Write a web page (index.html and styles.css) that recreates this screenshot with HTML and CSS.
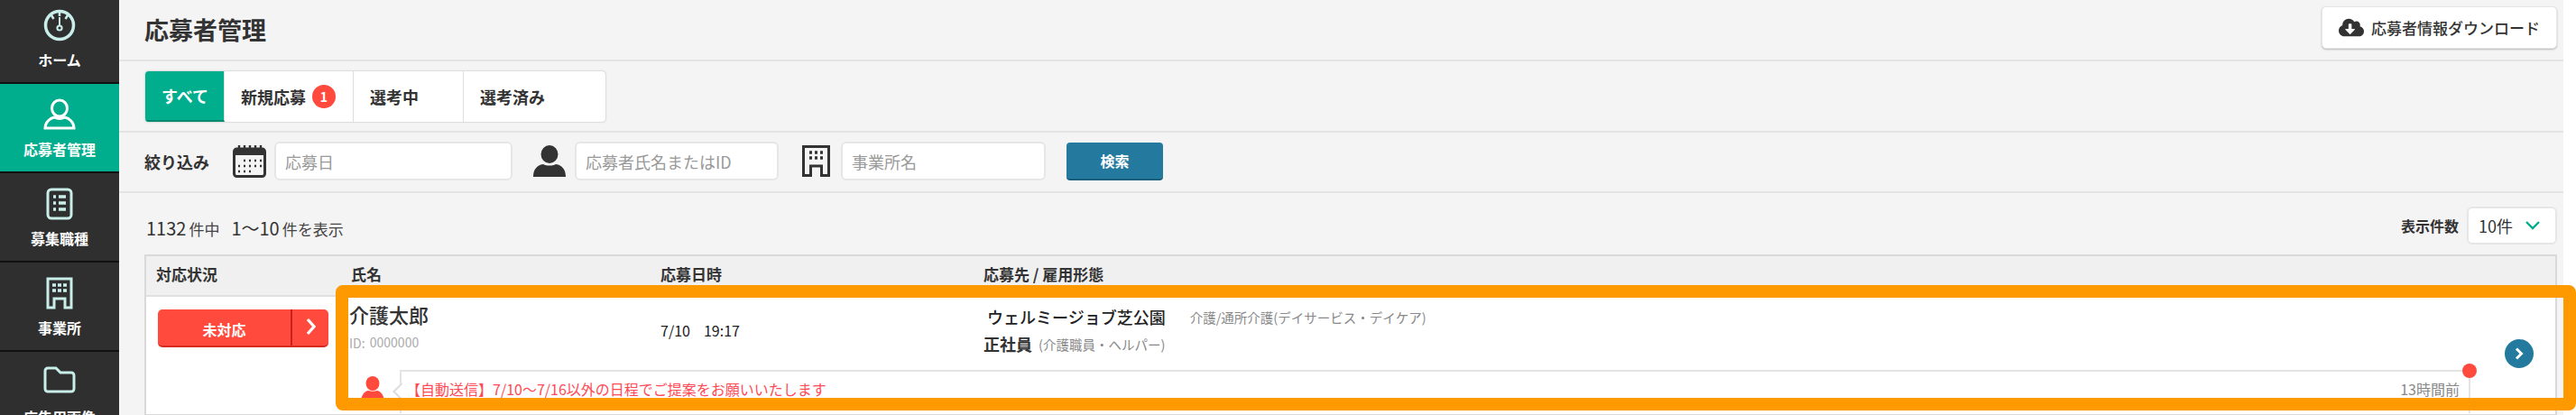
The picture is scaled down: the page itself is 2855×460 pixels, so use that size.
FILE: index.html
```html
<!DOCTYPE html>
<html lang="ja">
<head>
    <meta charset="UTF-8">
    <meta name="viewport" content="width=device-width, initial-scale=1.0">
    <title>応募者管理</title>
    <link rel="stylesheet" href="styles.css">
</head>
<body>
    <nav class="sidebar">
        <a class="nav-item nav-first">
            <svg class="nav-icon" width="36" height="36" viewBox="0 0 36 36" fill="none" stroke="currentColor" stroke-width="3.5">
                <circle cx="18" cy="18" r="15.5"/>
                <path d="M18 3v5M9 7l2.5 4M27 7l-2.5 4" stroke-width="2.5"/>
                <path d="M18 9v9" stroke-width="2"/>
                <circle cx="18" cy="21" r="2.6" stroke-width="2"/>
            </svg>
            <span>ホーム</span>
        </a>
        <a class="nav-item active">
            <svg class="nav-icon" width="36" height="36" viewBox="0 0 36 36" fill="none" stroke="currentColor" stroke-width="3">
                <ellipse cx="18" cy="11" rx="8.5" ry="9"/>
                <path d="M2 33c0-7 6-11 10-12 4 2 8 2 12 0 4 1 10 5 10 12z"/>
            </svg>
            <span>応募者管理</span>
        </a>
        <a class="nav-item">
            <svg class="nav-icon" width="30" height="36" viewBox="0 0 30 36" fill="none" stroke="currentColor" stroke-width="3">
                <rect x="2" y="2" width="26" height="32" rx="4"/>
                <path d="M8 10h3M8 17h3M8 24h3M14 10h8M14 17h8M14 24h8" stroke-width="3.5"/>
            </svg>
            <span>募集職種</span>
        </a>
        <a class="nav-item">
            <svg class="nav-icon" width="30" height="36" viewBox="0 0 30 36" fill="none" stroke="currentColor" stroke-width="3">
                <path d="M2 2h26v32h-7V24H9v10H2z"/>
                <path d="M7 9h4M13 9h4M19 9h4M7 15h4M13 15h4M19 15h4" stroke-width="3.5"/>
            </svg>
            <span>事業所</span>
        </a>
        <a class="nav-item">
            <svg class="nav-icon" width="36" height="30" viewBox="0 0 36 30" fill="none" stroke="currentColor" stroke-width="3">
                <path d="M2 5a3 3 0 0 1 3-3h9l5 5h12a3 3 0 0 1 3 3v15a3 3 0 0 1-3 3H5a3 3 0 0 1-3-3z"/>
            </svg>
            <span>広告用画像</span>
        </a>
    </nav>

    <main class="main">
        <header class="page-header">
            <h1>応募者管理</h1>
            <button class="download-btn">
                <svg width="28" height="23" viewBox="0 0 640 512" fill="#333"><path d="M537.6 226.6c4.1-10.7 6.4-22.4 6.4-34.6 0-53-43-96-96-96-19.7 0-38.1 6-53.3 16.2C367 64.2 315.3 32 256 32c-88.4 0-160 71.6-160 160 0 2.7.1 5.4.2 8.1C40.2 219.8 0 273.2 0 336c0 79.5 64.5 144 144 144h368c70.7 0 128-57.3 128-128 0-61.9-44-113.6-102.4-125.4zm-132.9 88.7L299.3 420.7c-6.2 6.2-16.4 6.2-22.6 0L171.3 315.3c-10.1-10.1-2.9-27.3 11.3-27.3H248V176c0-8.8 7.2-16 16-16h48c8.8 0 16 7.2 16 16v112h65.4c14.2 0 21.4 17.2 11.3 27.3z"/></svg>
                応募者情報ダウンロード
            </button>
        </header>

        <section class="tabs-bar">
            <div class="tabs">
                <div class="tab tab-all active">すべて</div>
                <div class="tab tab-new">新規応募<span class="badge">1</span></div>
                <div class="tab tab-progress">選考中</div>
                <div class="tab tab-done">選考済み</div>
            </div>
        </section>

        <section class="filter-bar">
            <span class="filter-label">絞り込み</span>
            <svg class="filter-icon icon-calendar" width="37" height="36" viewBox="0 0 37 36" fill="none">
                <rect x="1.5" y="4" width="34" height="30.5" rx="3" stroke="#333" stroke-width="3"/>
                <rect x="1.5" y="4" width="34" height="7" fill="#333"/>
                <path d="M7 0v8M13 0v8M19 0v8M25 0v8M31 0v8" stroke="#333" stroke-width="2.4"/>
                <path d="M12 17h2M18 17h2M24 17h2M30 17h2M6 23h2M12 23h2M18 23h2M24 23h2M30 23h2M6 29h2M12 29h2M18 29h2" stroke="#333" stroke-width="2.6"/>
            </svg>
            <input class="filter-input input-date" placeholder="応募日">
            <svg class="filter-icon icon-person" width="36" height="35" viewBox="0 0 36 35" fill="#333">
                <ellipse cx="18" cy="10" rx="9.5" ry="10"/>
                <path d="M0 35c0-8 4-13 11-14 4 2 10 2 14 0 7 1 11 6 11 14z"/>
            </svg>
            <input class="filter-input input-name" placeholder="応募者氏名またはID">
            <svg class="filter-icon icon-building" width="31" height="35" viewBox="0 0 31 35" fill="none" stroke="#333">
                <path d="M1.5 1.5h28v32h-8V23h-12v10.500h-8z" stroke-width="3"/>
                <path d="M8 8h3M14 8h3M20 8h3M8 14h3M14 14h3M20 14h3" stroke-width="3.4"/>
            </svg>
            <input class="filter-input input-office" placeholder="事業所名">
            <button class="search-btn">検索</button>
        </section>

        <section class="list-bar">
            <div class="count"><b>1132</b><small>件中</small><b class="count-range">1〜10</b><small>件を表示</small></div>
            <div class="per-page">
                <span class="per-page-label">表示件数</span>
                <div class="per-page-select">
                    10件
                    <svg width="16" height="10" viewBox="0 0 16 10" fill="none" stroke="#00ad8c" stroke-width="2.4"><path d="M1 1l7 7 7-7"/></svg>
                </div>
            </div>
        </section>

        <section class="table">
            <div class="table-head">
                <div>対応状況</div>
                <div>氏名</div>
                <div>応募日時</div>
                <div>応募先 / 雇用形態</div>
            </div>
            <div class="table-row">
                <div class="status-cell">
                    <button class="status-btn">
                        <span class="status-text">未対応</span>
                        <span class="status-arrow">
                            <svg width="11" height="20" viewBox="0 0 11 20" fill="none" stroke="#fff" stroke-width="3.2"><path d="M2 2l7 8-7 8"/></svg>
                        </span>
                    </button>
                </div>
                <div class="row-body">
                    <div class="row-info">
                        <div class="applicant">
                            <div class="applicant-name">介護太郎</div>
                            <div class="applicant-id"><span>ID:</span> 0000000</div>
                        </div>
                        <div class="applied-at">7/10<span class="applied-time">19:17</span></div>
                        <div class="applied-to">
                            <div class="office-line"><span class="office-name">ウェルミージョブ芝公園</span><span class="office-type">介護/通所介護(デイサービス・デイケア)</span></div>
                            <div class="job-line"><span class="job-type">正社員</span><span class="job-name">(介護職員・ヘルパー)</span></div>
                        </div>
                    </div>
                    <div class="message-row">
                        <svg class="message-avatar" width="26" height="30" viewBox="0 0 26 30" fill="#ff4a3d">
                            <ellipse cx="13" cy="8" rx="7.500" ry="8"/>
                            <path d="M0 30c0-8 3-13 8-14 3 1 7 1 10 0 5 1 8 6 8 14z"/>
                        </svg>
                        <div class="message">
                            <span class="message-text">【自動送信】7/10〜7/16以外の日程でご提案をお願いいたします</span>
                            <span class="message-time">13時間前</span>
                            <span class="message-dot"></span>
                        </div>
                    </div>
                </div>
                <div class="row-arrow">
                    <span class="circle-btn">
                        <svg width="10" height="14" viewBox="0 0 10 14" fill="none" stroke="#fff" stroke-width="3"><path d="M2 1.500l5.500 5.500L2 12.500"/></svg>
                    </span>
                </div>
            </div>
            <div class="highlight"></div>
        </section>
    </main>
</body>
</html>
```

FILE: styles.css
```css
* {
    box-sizing: border-box;
}
html, body {
    height: 460px;
    overflow: hidden;
}
body {
    margin: 0;
    display: flex;
    background: white;
    color: #333;
    font-family: "Noto Sans CJK JP", "Noto Sans", sans-serif;
}
button, input {
    font-family: inherit;
}

/* sidebar */
.sidebar {
    flex: 0 0 132px;
    background: #2f2f2f;
}
.nav-item {
    height: 99px;
    display: flex;
    flex-direction: column;
    align-items: center;
    color: #c9eeea;
    border-bottom: 2px solid #111;
    position: relative;
}
.nav-item span {
    position: absolute;
    top: 60px;
    color: white;
    font-size: 16px;
    font-weight: 700;
    line-height: 24px;
    white-space: nowrap;
}
.nav-icon {
    margin-top: 16px;
}
.nav-first {
    height: 93px;
}
.nav-first .nav-icon {
    margin-top: 10px;
}
.nav-first span {
    top: 54px;
}
.nav-item.active {
    background: #00ad8c;
    color: white;
}

/* main column */
.main {
    flex: 0 0 2709px;
    min-width: 0;
    background: #f4f4f4;
}
.page-header {
    height: 68px;
    display: flex;
    justify-content: space-between;
    align-items: flex-start;
    padding: 7px 7px 0 28px;
    border-bottom: 2px solid #e4e4e4;
}
h1 {
    margin: 6px 0 0;
    font-size: 27px;
    font-weight: 700;
    line-height: 40px;
}
.download-btn {
    width: 261px;
    height: 47px;
    display: flex;
    align-items: center;
    justify-content: center;
    gap: 8px;
    background: white;
    border: 1px solid #e6e6e6;
    border-radius: 5px;
    box-shadow: 0 1px 2px rgba(0,0,0,0.25);
    color: #333;
    font-size: 17px;
    font-weight: 500;
    padding: 0;
}

/* tabs */
.tabs-bar {
    height: 79px;
    padding: 11px 0 0 29px;
    border-bottom: 2px solid #e4e4e4;
}
.tabs {
    display: inline-flex;
    height: 56px;
    background: white;
    border-radius: 4px;
    box-shadow: 0 0 2px rgba(0,0,0,0.35);
    overflow: hidden;
}
.tab {
    display: flex;
    align-items: center;
    font-size: 18px;
    font-weight: 700;
    border-right: 1px solid #ddd;
    padding-left: 18px;
}
.tab-all {
    width: 88px;
}
.tab-new {
    width: 143px;
}
.tab-progress {
    width: 122px;
}
.tab-done {
    width: 157px;
    border-right: none;
}
.tab.active {
    background: #00ad8c;
    border-bottom: 2px solid #008a70;
    color: white;
}
.badge {
    width: 26px;
    height: 26px;
    margin-left: 7px;
    border-radius: 50%;
    background: #ff4a3d;
    color: white;
    font-size: 14px;
    font-weight: 700;
    line-height: 26px;
    text-align: center;
}

/* filter */
.filter-bar {
    height: 67px;
    display: flex;
    align-items: center;
    padding: 0 0 2px 28px;
    border-bottom: 2px solid #e4e4e4;
}
.filter-label {
    width: 98px;
    font-size: 18px;
    font-weight: 700;
}
.filter-icon {
    flex: none;
}
.filter-input {
    height: 43px;
    background: white;
    border: 2px solid #e6e6e6;
    border-radius: 6px;
    padding: 0 10px;
    font-size: 18px;
}
.filter-input::placeholder {
    color: #999;
}
.input-date {
    width: 264px;
    margin: 0 23px 0 9px;
}
.input-name {
    width: 226px;
    margin: 0 26px 0 10px;
}
.input-office {
    width: 227px;
    margin: 0 23px 0 12px;
}
.search-btn {
    width: 107px;
    height: 42px;
    background: #237a9e;
    border: none;
    border-bottom: 2px solid #1a5f7c;
    border-radius: 4px;
    color: white;
    font-size: 16px;
    font-weight: 700;
}

/* list header */
.list-bar {
    height: 68px;
    display: flex;
    justify-content: space-between;
    align-items: flex-start;
    padding: 15px 7px 0 30px;
}
.count {
    padding-top: 9px;
    line-height: 30px;
    font-size: 17px;
}
.count b {
    font-size: 20px;
    font-weight: 400;
}
.count small {
    font-size: 17px;
    margin-left: 3px;
    color: #444;
}
.count .count-range {
    margin-left: 13px;
}
.per-page {
    display: flex;
    align-items: center;
    gap: 9px;
}
.per-page-label {
    font-size: 16px;
    font-weight: 700;
}
.per-page-select {
    width: 100px;
    height: 42px;
    display: flex;
    align-items: center;
    justify-content: space-between;
    padding: 0 17px 0 11px;
    background: white;
    border: 2px solid #e6e6e6;
    border-radius: 6px;
    font-size: 18px;
}

/* table */
.table {
    position: relative;
    margin: 0 7px 0 28px;
    background: white;
    border: 2px solid #d9d9d9;
}
.table-head {
    height: 45px;
    display: grid;
    grid-template-columns: 227px 343px 358px 1fr;
    align-items: center;
    padding-bottom: 4px;
    background: #f0f0f0;
    border-bottom: 2px solid #e0e0e0;
    font-size: 17px;
    font-weight: 700;
}
.table-head div:first-child {
    padding-left: 11px;
}
.table-row {
    display: flex;
    height: 130px;
}
.status-cell {
    flex: 0 0 227px;
    padding: 14px 0 0 13px;
}
.status-btn {
    width: 189px;
    height: 42px;
    display: flex;
    padding: 0;
    background: #ff4a3d;
    border: none;
    border-bottom: 2px solid #d92a20;
    border-radius: 5px;
    color: white;
}
.status-text {
    width: 149px;
    border-right: 2px solid #c8201a;
    font-size: 16px;
    font-weight: 700;
    line-height: 44px;
}
.status-arrow {
    flex: 1;
    padding-top: 9px;
}
.row-body {
    flex: 0 0 2349px;
}
.row-info {
    height: 81px;
    display: grid;
    grid-template-columns: 343px 358px 1fr;
}
.applicant {
    margin-left: -2px;
    padding-top: 3px;
}
.applicant-name {
    font-size: 22px;
    font-weight: 500;
    line-height: 32px;
}
.applicant-id {
    margin-top: 5px;
    color: #aaa;
    font-size: 14px;
    line-height: 20px;
}
.applicant-id span {
    position: relative;
    top: 1px;
    margin-right: 2px;
}
.applied-at {
    align-self: center;
    margin-bottom: 7px;
    font-size: 16px;
    color: #222;
}
.applied-time {
    margin-left: 15px;
}
.applied-to {
    padding-top: 8px;
}
.office-line {
    display: flex;
    align-items: center;
    height: 28px;
    margin-left: 4px;
}
.office-name {
    font-size: 18px;
    font-weight: 500;
    color: #222;
}
.office-type {
    margin-left: 27px;
    color: #888;
    font-size: 14.5px;
}
.job-line {
    display: flex;
    align-items: center;
    height: 28px;
    margin-top: 2px;
}
.job-type {
    font-size: 18px;
    font-weight: 700;
}
.job-name {
    margin-left: 7px;
    color: #888;
    font-size: 14.5px;
}
.message-row {
    display: flex;
}
.message-avatar {
    flex: none;
    margin: 7px 17px 0 11px;
}
.message {
    position: relative;
    flex: 1;
    height: 48px;
    display: flex;
    justify-content: space-between;
    padding: 6px 10px 0 5px;
    border: 2px solid #e4e4e4;
    border-bottom: none;
    line-height: 26px;
    font-size: 16px;
}
.message::before {
    content: "";
    position: absolute;
    left: -7px;
    top: 15px;
    width: 12px;
    height: 12px;
    background: white;
    border-left: 2px solid #ddd;
    border-bottom: 2px solid #ddd;
    transform: rotate(45deg);
}
.message-text {
    color: #ff4a55;
}
.message-time {
    color: #888;
}
.message-dot {
    position: absolute;
    top: -9px;
    right: -9px;
    width: 16px;
    height: 16px;
    border-radius: 50%;
    background: #ff4a3d;
}
.row-arrow {
    flex: 0 0 94px;
    display: flex;
    align-items: flex-start;
    padding: 47px 0 0 38px;
}
.circle-btn {
    width: 32px;
    height: 32px;
    display: flex;
    align-items: center;
    justify-content: center;
    border-radius: 50%;
    background: #237a9e;
}
.highlight {
    position: absolute;
    left: 210px;
    top: 32px;
    width: 2483px;
    height: 139px;
    border: 14px solid #ff9900;
    border-radius: 8px;
}
```
